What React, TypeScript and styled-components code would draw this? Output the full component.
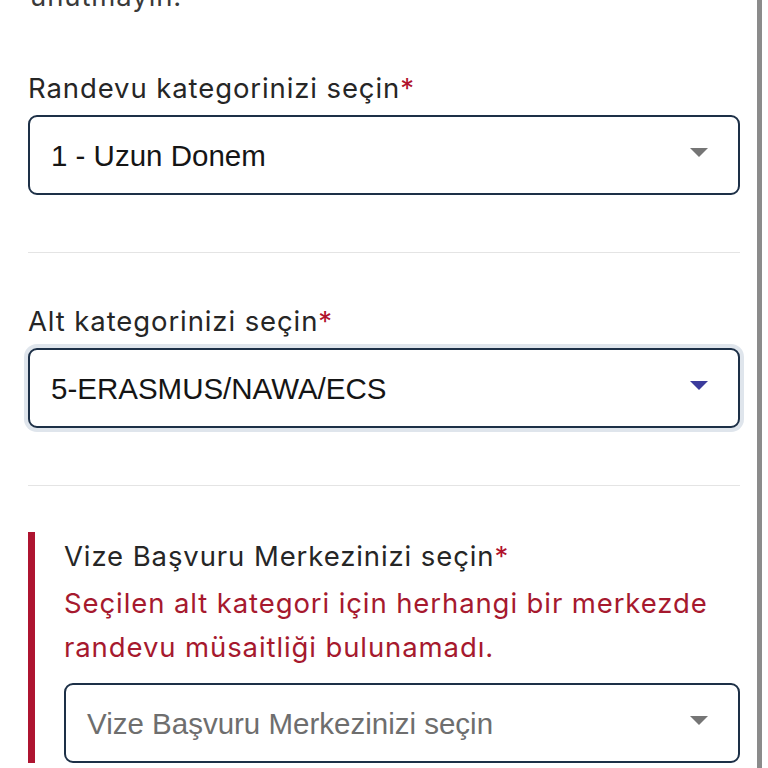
import React from "react";
import styled, { createGlobalStyle } from "styled-components";

const GlobalStyle = createGlobalStyle`
  html, body { margin: 0; padding: 0; background: #ffffff; }
  body { font-family: Inter, "Noto Sans", sans-serif; }
`;

const Page = styled.div`
  display: flex;
  width: 768px;
  height: 768px;
  overflow: hidden;
  background: #ffffff;
`;

const Content = styled.main`
  width: 757px;
  box-sizing: border-box;
  padding: 0 17px 0 28px;
  display: flex;
  flex-direction: column;
`;

const Edge = styled.div`
  width: 5px;
  flex: none;
  background: #8b8b8b;
`;

const Lead = styled.p`
  margin: -26px 0 0 2px;
  font-size: 27.5px;
  line-height: 44px;
  letter-spacing: 0.9px;
  color: #3a3a3a;
`;

const Field = styled.section<{ $first?: boolean }>`
  display: flex;
  flex-direction: column;
  margin-top: ${(p) => (p.$first ? "48px" : "46px")};
`;

const Label = styled.label`
  display: block;
  font-size: 27.5px;
  line-height: 44px;
  color: #262626;
  letter-spacing: 0.9px;
`;

const Star = styled.span`
  color: #b0122c;
`;

const SelectBox = styled.div<{ $focused?: boolean }>`
  margin-top: 5px;
  height: 80px;
  box-sizing: border-box;
  border: 2px solid #1d3047;
  border-radius: 9px;
  background: #ffffff;
  display: flex;
  align-items: center;
  justify-content: space-between;
  padding: 0 30px 0 21px;
  font-family: "Liberation Sans", Arial, sans-serif;
  font-size: 29.5px;
  box-shadow: ${(p) => (p.$focused ? "0 0 0 4px #dfe5ec" : "none")};
`;

const Value = styled.span<{ $placeholder?: boolean }>`
  color: ${(p) => (p.$placeholder ? "#6e6e6e" : "#151515")};
  padding-top: 1px;
`;

const Caret = styled.span<{ $color: string }>`
  width: 0;
  height: 0;
  border-left: 9px solid transparent;
  border-right: 9px solid transparent;
  border-top: 9px solid ${(p) => p.$color};
  margin-bottom: 5px;
`;

const Divider = styled.hr`
  margin: 57px 0 0;
  border: 0;
  height: 1px;
  background: #e4e4e4;
`;

const ErrorGroup = styled.section`
  margin-top: 46px;
  display: flex;
  border-left: 7px solid #ae1430;
  padding-left: 29px;
`;

const ErrorInner = styled.div`
  flex: 1;
  display: flex;
  flex-direction: column;
  padding-top: 2px;
`;

const ErrorText = styled.p`
  margin: 3px 0 9px;
  font-size: 27.5px;
  line-height: 44px;
  letter-spacing: 0.9px;
  color: #a6192e;
`;

const Select = ({
  value,
  placeholder,
  focused,
  caret,
}: {
  value: string;
  placeholder?: boolean;
  focused?: boolean;
  caret: string;
}) => (
  <SelectBox $focused={focused}>
    <Value $placeholder={placeholder}>{value}</Value>
    <Caret $color={caret} />
  </SelectBox>
);

export default function App() {
  return (
    <>
      <GlobalStyle />
      <Page>
        <Content>
          <Lead>unutmayın.</Lead>
          <Field $first>
            <Label>
              Randevu kategorinizi seçin<Star>*</Star>
            </Label>
            <Select value="1 - Uzun Donem" caret="#757575" />
          </Field>
          <Divider />
          <Field>
            <Label>
              Alt kategorinizi seçin<Star>*</Star>
            </Label>
            <Select value="5-ERASMUS/NAWA/ECS" caret="#3b3b9c" focused />
          </Field>
          <Divider />
          <ErrorGroup>
            <ErrorInner>
              <Label>
                Vize Başvuru Merkezinizi seçin<Star>*</Star>
              </Label>
              <ErrorText>
                Seçilen alt kategori için herhangi bir merkezde randevu müsaitliği bulunamadı.
              </ErrorText>
              <Select value="Vize Başvuru Merkezinizi seçin" caret="#757575" placeholder />
            </ErrorInner>
          </ErrorGroup>
        </Content>
        <Edge />
      </Page>
    </>
  );
}
